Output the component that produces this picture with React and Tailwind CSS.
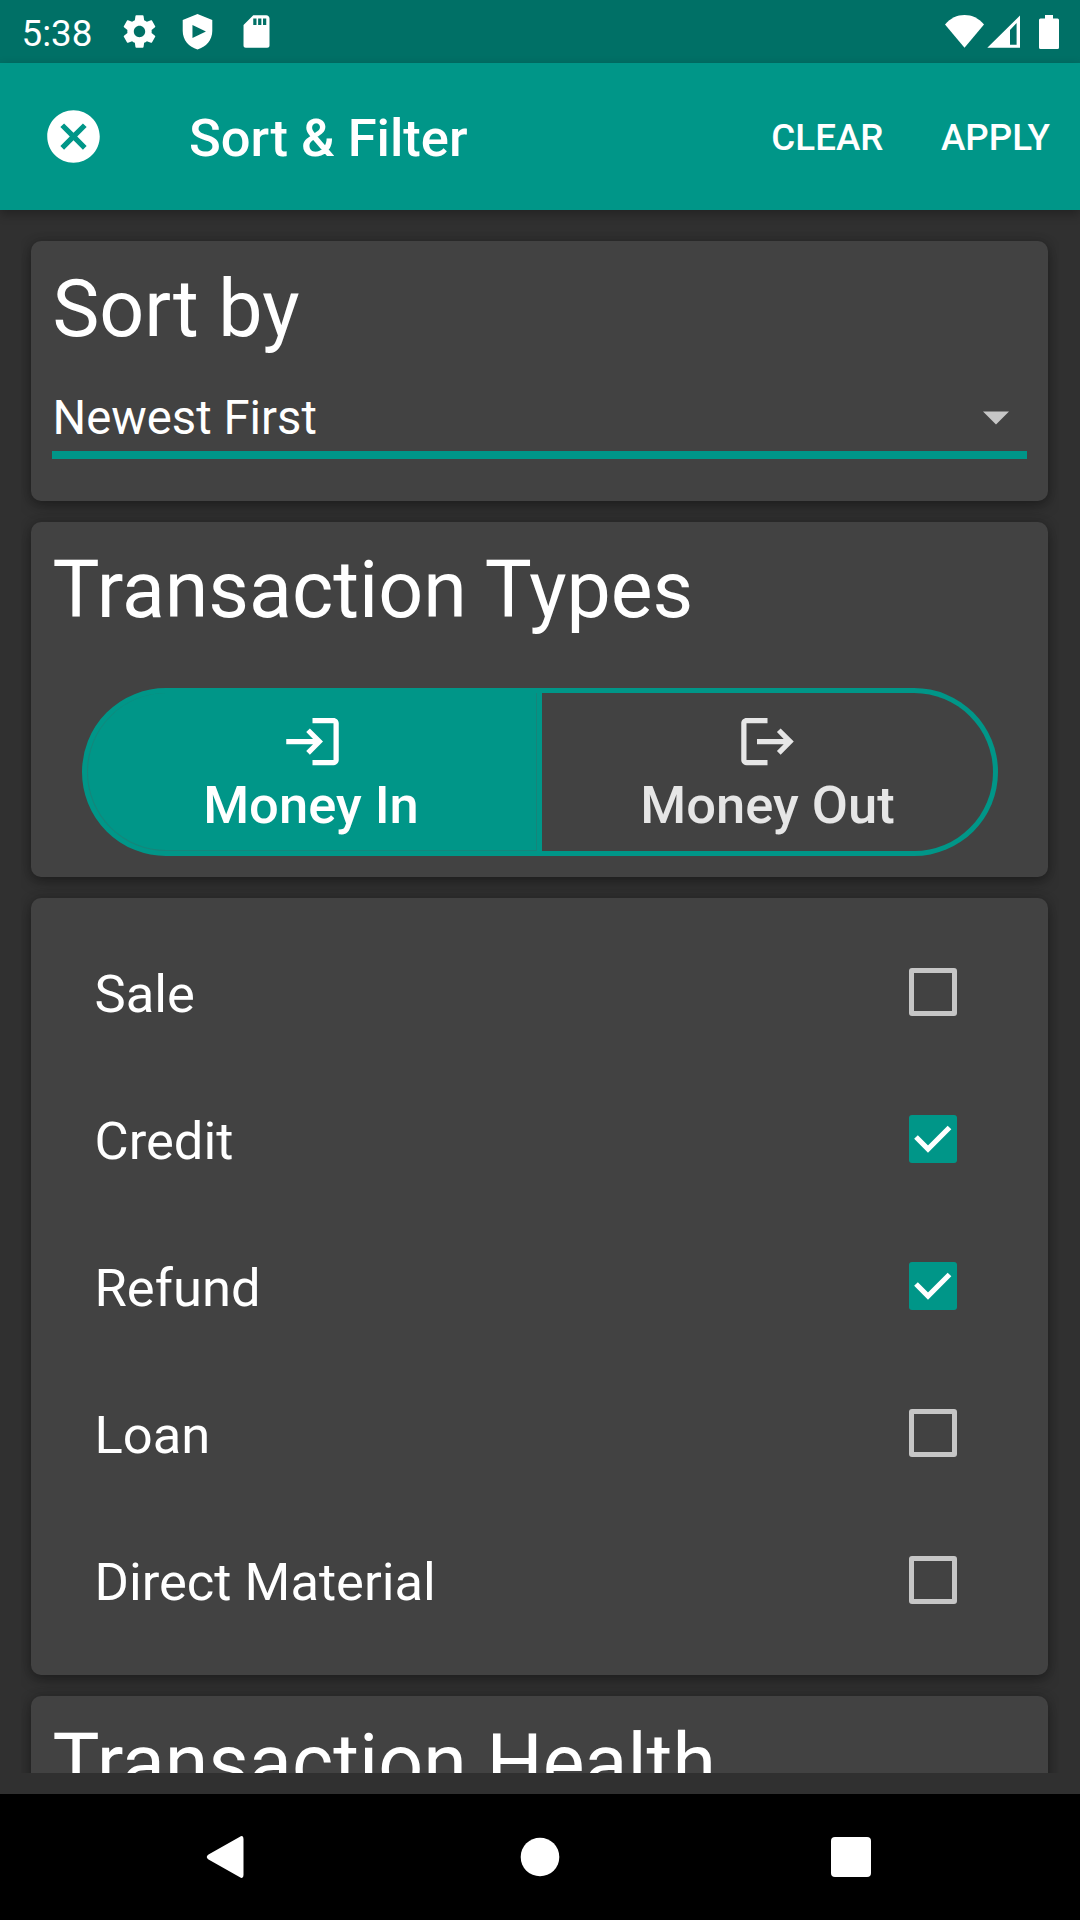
import React, { useState } from "react";

const TYPES = [
  { id: "sale", label: "Sale" },
  { id: "credit", label: "Credit" },
  { id: "refund", label: "Refund" },
  { id: "loan", label: "Loan" },
  { id: "material", label: "Direct Material" },
];

function Icon({ d, className }) {
  return (
    <svg viewBox="0 0 24 24" fill="currentColor" className={className}>
      <path fillRule="evenodd" d={d} />
    </svg>
  );
}

const icons = {
  settings:
    "M19.43 12.98c.04-.32.07-.64.07-.98s-.03-.66-.07-.98l2.11-1.65c.19-.15.24-.42.12-.64l-2-3.46c-.12-.22-.39-.3-.61-.22l-2.49 1c-.52-.4-1.08-.73-1.69-.98l-.38-2.65C14.46 2.18 14.25 2 14 2h-4c-.25 0-.46.18-.49.42l-.38 2.65c-.61.25-1.17.59-1.69.98l-2.49-1c-.23-.09-.49 0-.61.22l-2 3.46c-.13.22-.07.49.12.64l2.11 1.65c-.04.32-.07.65-.07.98s.03.66.07.98l-2.11 1.65c-.19.15-.24.42-.12.64l2 3.46c.12.22.39.3.61.22l2.49-1c.52.4 1.08.73 1.69.98l.38 2.65c.03.24.24.42.49.42h4c.25 0 .46-.18.49-.42l.38-2.65c.61-.25 1.17-.59 1.69-.98l2.49 1c.23.09.49 0 .61-.22l2-3.46c.12-.22.07-.49-.12-.64l-2.11-1.65zM12 15.5c-1.93 0-3.5-1.57-3.5-3.5s1.57-3.5 3.5-3.5 3.5 1.57 3.5 3.5-1.57 3.5-3.5 3.5z",
  shield:
    "M12 1.2L21.1 4.9V11.7C21.1 17.3 17.3 21.5 12 23.1C6.7 21.5 2.9 17.3 2.9 11.7V4.9ZM8.9 8v8l8.3-4z",
  sdCard:
    "M18 2h-8L4.02 8 4 20.6c0 .8.6 1.4 1.4 1.4h13.2c.8 0 1.4-.6 1.4-1.4V4c0-1.1-.9-2-2-2zm-6 6h-2V4h2v4zm3 0h-2V4h2v4zm3 0h-2V4h2v4z",
  close:
    "M12 2C17.53 2 22 6.47 22 12C22 17.53 17.53 22 12 22C6.47 22 2 17.53 2 12C2 6.47 6.47 2 12 2M15.59 7L12 10.59L8.41 7L7 8.41L10.59 12L7 15.59L8.41 17L12 13.41L15.59 17L17 15.59L13.41 12L17 8.41L15.59 7Z",
  login:
    "M11 7L9.6 8.4L12.2 11H2V13H12.2L9.6 15.6L11 17L16 12L11 7M20 19H12V21H20C21.1 21 22 20.1 22 19V5C22 3.9 21.1 3 20 3H12V5H20V19Z",
  logout:
    "M17 7L15.59 8.41L18.17 11H8V13H18.17L15.59 15.58L17 17L22 12M4 5H12V3H4C2.9 3 2 3.9 2 5V19C2 20.1 2.9 21 4 21H12V19H4V5Z",
};

function StatusBar() {
  return (
    <div className="flex h-[63px] shrink-0 items-center bg-[#007066] text-white">
      <span className="ml-[21.5px] w-[98.5px] pt-[5px] text-[36.75px] leading-none">5:38</span>
      <div className="flex gap-[19px]">
        <Icon d={icons.settings} className="size-[39px]" />
        <Icon d={icons.shield} className="size-[39px]" />
        <Icon d={icons.sdCard} className="ml-[0.5px] size-[39px]" />
      </div>
      <svg viewBox="0 0 114 34" fill="currentColor" className="mr-[21px] ml-auto h-[34px] w-[114px]">
        <path d="M0 9.5C5.5 3 12 0 19.5 0S33.5 3 39 9.5L19.5 32.7Z" />
        <path fillRule="evenodd" d="M42.3 32.8L75 .5V32.8ZM65 15V29.7H71.6V8Z" />
        <path d="M100 0h8v3.5h4.5q1.500 0 1.500 1.500v27.5q0 1.500-1.500 1.500h-17q-1.500 0-1.500-1.500v-27.5q0-1.500 1.500-1.500h4.500z" />
      </svg>
    </div>
  );
}

function Toolbar({ onClear }) {
  return (
    <header className="relative flex h-[147px] shrink-0 items-center bg-[#009688] text-white shadow-[0_4px_10px_rgba(0,0,0,0.3)]">
      <button type="button" className="ml-[42px]">
        <Icon d={icons.close} className="size-[63px]" />
      </button>
      <h1 className="ml-[84px] pt-[3px] text-[52.5px] leading-none font-medium">Sort &amp; Filter</h1>
      <div className="mr-[30px] ml-auto flex gap-[57.5px] pt-[3px] text-[36.75px] leading-none font-medium">
        <button type="button" onClick={onClear}>CLEAR</button>
        <button type="button">APPLY</button>
      </div>
    </header>
  );
}

function Card({ className, children }) {
  return (
    <section
      className={`shrink-0 rounded-[10px] bg-[#424242] shadow-[0_5px_14px_rgba(0,0,0,0.34),0_0_10px_rgba(0,0,0,0.14)] ${className}`}
    >
      {children}
    </section>
  );
}

function Heading({ children }) {
  return <h2 className="pl-[0.5px] text-[78.9px] leading-[96px] whitespace-nowrap">{children}</h2>;
}

function Checkbox({ checked }) {
  if (!checked) {
    return <span className="size-12 rounded-[3px] border-5 border-[#c6c6c6]" />;
  }
  return (
    <span className="size-12 rounded-[3px] bg-[#009688]">
      <svg viewBox="0 0 48 48" fill="none" stroke="#fff" strokeWidth="5.2" className="size-12">
        <path d="M7 22L19 34L40.5 12.5" />
      </svg>
    </span>
  );
}

function App() {
  const [direction, setDirection] = useState("in");
  const [checked, setChecked] = useState(["credit", "refund"]);

  function toggle(id) {
    setChecked((prev) => (prev.includes(id) ? prev.filter((x) => x !== id) : [...prev, id]));
  }

  return (
    <div className="flex h-[1920px] w-[1080px] flex-col overflow-hidden bg-[#303030] font-[Roboto,sans-serif] text-white">
      <StatusBar />
      <Toolbar onClear={() => setChecked([])} />

      <main className="mx-[21px] my-[21px] flex min-h-0 flex-1 flex-col gap-[21px] overflow-hidden pt-[10px] pr-[11px] pl-[10px]">
        <Card className="h-[260px] px-[21px] pt-[20px]">
          <Heading>Sort by</Heading>
          <button
            type="button"
            className="mt-[28px] flex h-[74px] w-full items-center border-b-8 border-[#009688] pr-[18px] text-left text-[47.25px] leading-none"
          >
            <span className="pt-[2px] pl-[0.5px]">Newest First</span>
            <svg viewBox="0 0 26 14" className="ml-auto h-[14px] w-[26px]">
              <path d="M0 0.5H26L13 13.5Z" fill="#c6c6c6" />
            </svg>
          </button>
        </Card>

        <Card className="h-[355px] px-[21px] pt-[20px]">
          <Heading>Transaction Types</Heading>
          <div className="mt-[50px] mr-[29px] ml-[30px] flex h-[168px] text-[52.5px] leading-[65px] font-medium">
            <button
              type="button"
              onClick={() => setDirection("in")}
              className={`w-[460px] rounded-l-full border-5 border-[#009688] ${direction === "in" ? "bg-[#009688] text-white" : "text-[#e6e6e6]"}`}
            >
              <span className="flex h-full flex-col items-center rounded-l-full border-r border-b border-l border-[#16857a] pt-[17px]">
                <Icon d={icons.login} className="size-[63px]" />
                <span className="pr-[2px]">Money In</span>
              </span>
            </button>
            <button
              type="button"
              onClick={() => setDirection("out")}
              className={`flex flex-1 flex-col items-center rounded-r-full border-5 border-l-0 border-[#009688] pt-[17px] ${direction === "out" ? "bg-[#009688] text-white" : "text-[#e6e6e6]"}`}
            >
              <Icon d={icons.logout} className="size-[63px]" />
              Money Out
            </button>
          </div>
        </Card>

        <Card className="h-[777px] pt-[20px]">
          {TYPES.map((t) => (
            <button
              key={t.id}
              type="button"
              onClick={() => toggle(t.id)}
              className="flex h-[147px] w-full items-center justify-between pr-[91px] pl-[63.5px] text-[52.5px] leading-none"
            >
              <span className="pt-[5px]">{t.label}</span>
              <Checkbox checked={checked.includes(t.id)} />
            </button>
          ))}
        </Card>

        <Card className="h-[355px] px-[21px] pt-[19px]">
          <Heading>Transaction Health</Heading>
        </Card>
      </main>

      <nav className="flex h-[126px] shrink-0 items-center bg-black">
        <svg viewBox="0 0 1080 126" fill="#fff" className="h-[126px] w-full">
          <path d="M208.5 60.5L239.5 43Q243.5 40.5 243.5 45V81Q243.5 85.5 239.5 83L208.5 65.5Q205 63 208.5 60.5Z" />
          <circle cx="540" cy="63" r="19.3" />
          <rect x="831" y="43" width="40" height="40" rx="4" />
        </svg>
      </nav>
    </div>
  );
}

export default App;
